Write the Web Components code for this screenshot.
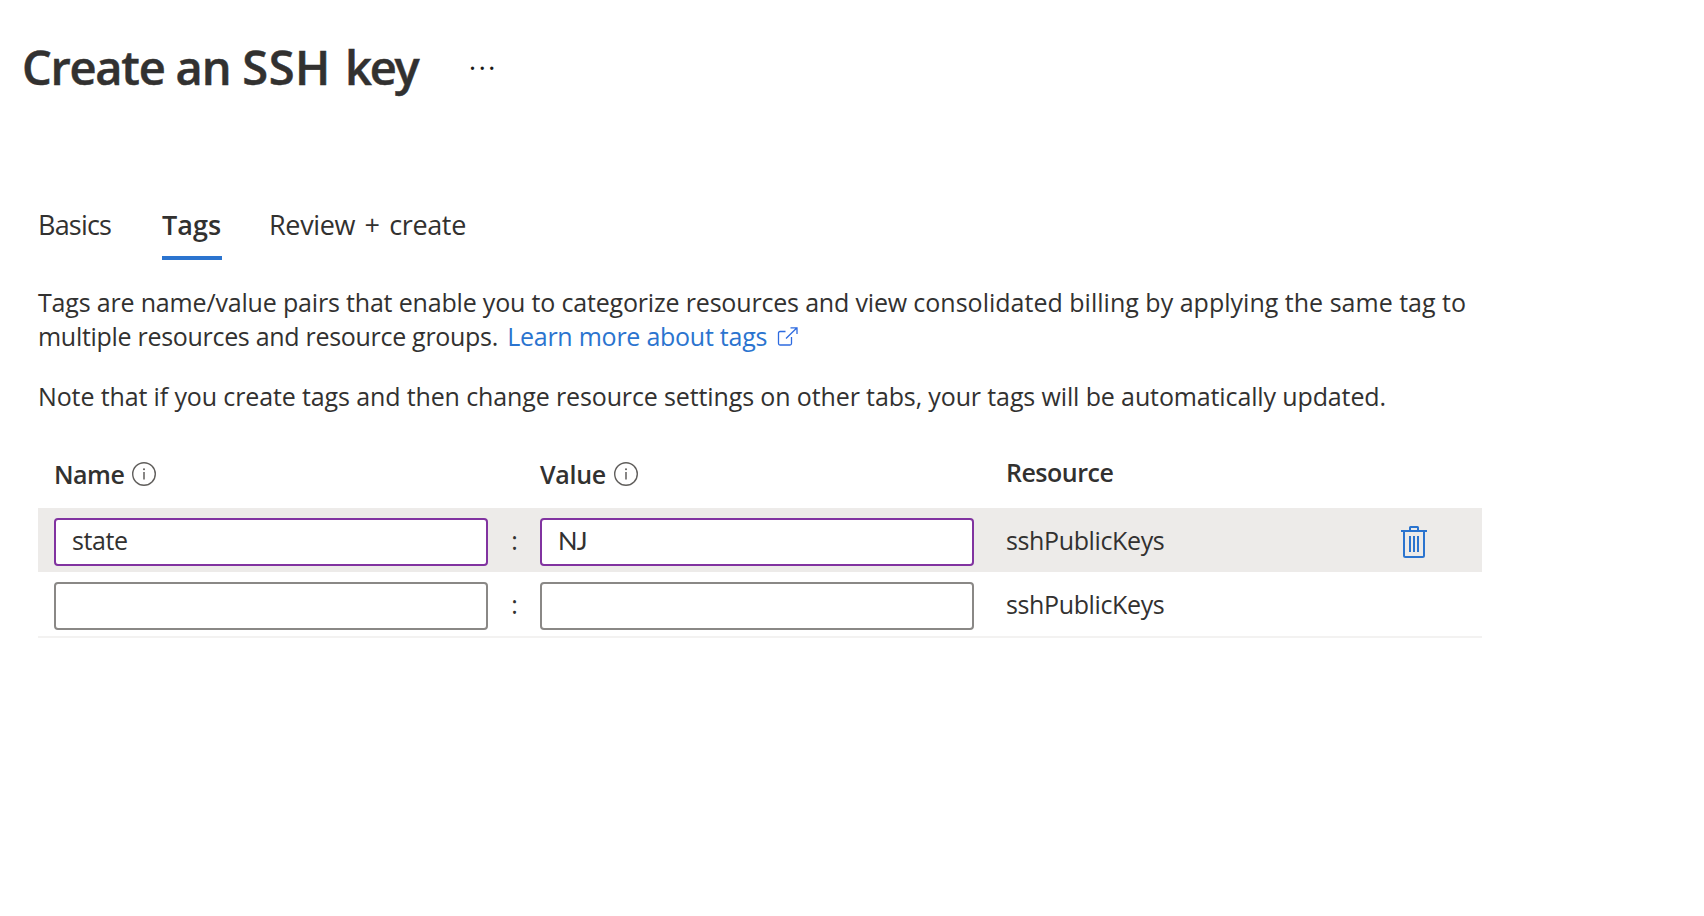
<!DOCTYPE html>
<html lang="en">
<head>
<meta charset="utf-8">
<title>Create an SSH key</title>
<style>
html,body{margin:0;background:#fff;height:100%;overflow:hidden}
body{font:400 25px/34px "Open Sans","Noto Sans",sans-serif;color:#323130}
</style>
</head>
<body>
<ssh-key-page></ssh-key-page>
<script>
const define = (name, html, setup) => {
  const tpl = document.createElement('template');
  tpl.innerHTML = html;
  customElements.define(name, class extends HTMLElement {
    constructor() {
      super();
      this.attachShadow({mode: 'open'}).append(tpl.content.cloneNode(true));
    }
    connectedCallback() { if (setup) setup(this, this.shadowRoot); }
  });
};

define('more-button', `
<style>
:host{display:block;font-family:"Noto Sans",sans-serif;font-size:26px;line-height:40px;letter-spacing:2.7px;color:#1b1a19;padding:15px 0 0 0}
</style><span>···</span>`);

define('blade-header', `
<style>
:host{display:flex;align-items:flex-start;height:208px;padding:32px 0 0 22px;box-sizing:border-box}
h1{margin:0;font-size:47px;line-height:70px;font-weight:600;letter-spacing:-.82px;width:447px;white-space:nowrap;-webkit-text-stroke:.5px currentColor}
</style><h1><slot></slot></h1><more-button></more-button>`);

define('tab-item', `
<style>
:host{display:block;box-sizing:border-box;height:52px;line-height:34px;font-size:27px;white-space:nowrap;border-bottom:4px solid transparent;letter-spacing:-.8px}
:host([selected]){font-weight:600;border-color:#2b74cf;letter-spacing:0}
</style><slot></slot>`);

define('tab-bar', `
<style>
:host{display:grid;grid-template-columns:124px 60px auto;column-gap:0;justify-content:start;padding-left:38px}
tab-item:nth-child(4){margin-left:47px;letter-spacing:-.35px;word-spacing:2.8px}
</style><tab-item>Basics</tab-item><tab-item selected>Tags</tab-item><tab-item>Review + create</tab-item>`);

define('external-link', `
<style>
:host{display:inline;color:#2b74cf;letter-spacing:-.25px}
svg{margin-left:10px;vertical-align:-1px}
</style><slot></slot><svg width="22" height="20" viewBox="0 0 22 20" fill="none" stroke="#2e6be0" stroke-width="1.3"><path d="M8.5 4.5H3Q1.5 4.5 1.5 6v10.500q0 1.500 1.500 1.500h10q1.500 0 1.500-1.500V10"/><path d="M9 11.500 20 .8M13.500.8H20V7"/></svg>`);

define('tags-intro', `
<style>
:host{display:block;padding:25px 0 0 38px;white-space:nowrap}
p{margin:0 0 26px}
.a{letter-spacing:-.175px}.a2{letter-spacing:.012px}.b{letter-spacing:-.297px;margin-right:3px}.c{letter-spacing:-.125px}
</style>
<p><span class="a">Tags are name/value pairs that enable you to categorize resources and view </span><span class="a2">consolidated billing by applying the same tag to</span><br><span class="b">multiple resources and resource groups. </span><external-link>Learn more about tags</external-link></p>
<p class="c">Note that if you create tags and then change resource settings on other tabs, your tags will be automatically updated.</p>`);

define('info-icon', `
<style>:host{display:block;height:24px}svg{display:block}</style>
<svg width="24" height="24" viewBox="0 0 24 24" fill="none" stroke="#605e5c"><circle cx="12" cy="12" r="11.300" stroke-width="1.400"/><path d="M12 10v7.500" stroke-width="1.500"/><circle cx="12" cy="7.300" r="1" fill="#605e5c" stroke="none"/></svg>`);

define('column-label', `
<style>:host{display:flex;align-items:flex-start;font-weight:600;letter-spacing:-.5px;white-space:nowrap}
info-icon{margin:5px 0 0 8px}</style>
<span><slot></slot></span>`, (host, root) => {
  if (host.hasAttribute('info')) root.append(document.createElement('info-icon'));
});

define('tag-input', `
<style>
:host{display:block;box-sizing:border-box;height:48px;border:2px solid #8a8886;border-radius:4px;background:#fff;padding:3px 0 0 16px;letter-spacing:-.4px;line-height:34px}
:host([edited]){border-color:#8133a0}
:host([wide]){font-family:Lato,"Open Sans",sans-serif;font-size:25.500px;letter-spacing:-.8px}
</style><slot></slot>`);

define('delete-icon', `
<style>:host{display:block;height:34px;margin-top:5px}svg{display:block}</style>
<svg width="26" height="34" viewBox="0 0 26 34" fill="none" stroke="#2b74cf" stroke-width="2"><path d="M0 5H26M9 5V1.500Q9 1 9.500 1h7q.5 0 .5.500V5M3 5V29.500Q3 31 4.500 31h17q1.500 0 1.500-1.500V5M9 10V26M13 10V26M17 10V26"/></svg>`);

define('tag-row', `
<style>
:host{display:grid;grid-template-columns:434px 52px 434px 32px 395px auto;align-items:center;box-sizing:border-box;height:64px;padding:0 0 0 16px;letter-spacing:-.37px}
:host([active]){background:#edebe9}
.in{margin-top:4px}
.colon{text-align:center;letter-spacing:0;padding-left:1px}
.res{white-space:nowrap}
</style>
<div class="in"><slot name="name"></slot></div><span class="colon">:</span><div class="in"><slot name="value"></slot></div><span></span><span class="res"><slot></slot></span>`, (host, root) => {
  if (host.hasAttribute('active')) root.append(document.createElement('delete-icon'));
});

define('tag-table', `
<style>
:host{display:block;margin:44px 0 0 38px;width:1444px;border-bottom:2px solid #f3f2f1}
header{display:grid;grid-template-columns:486px 466px auto;padding-left:16px;height:51px}
header column-label:nth-child(2){letter-spacing:-.3px}
header column-label:last-child{margin-top:-2px}
</style>
<header><column-label info>Name</column-label><column-label info>Value</column-label><column-label>Resource</column-label></header>
<tag-row active><tag-input slot="name" edited>state</tag-input><tag-input slot="value" edited wide>NJ</tag-input>sshPublicKeys</tag-row>
<tag-row><tag-input slot="name"></tag-input><tag-input slot="value"></tag-input>sshPublicKeys</tag-row>`);

define('ssh-key-page', `
<style>:host{display:block}
.w1{letter-spacing:-1.27px}.w2{letter-spacing:.5px}.w3{letter-spacing:-2.200px}.gap{letter-spacing:1.9px}</style>
<blade-header><span class="w1">Create </span>an <span class="w2">SSH</span><span class="gap"> </span><span class="w3">key</span></blade-header><tab-bar></tab-bar><tags-intro></tags-intro><tag-table></tag-table>`);
</script>
</body>
</html>
